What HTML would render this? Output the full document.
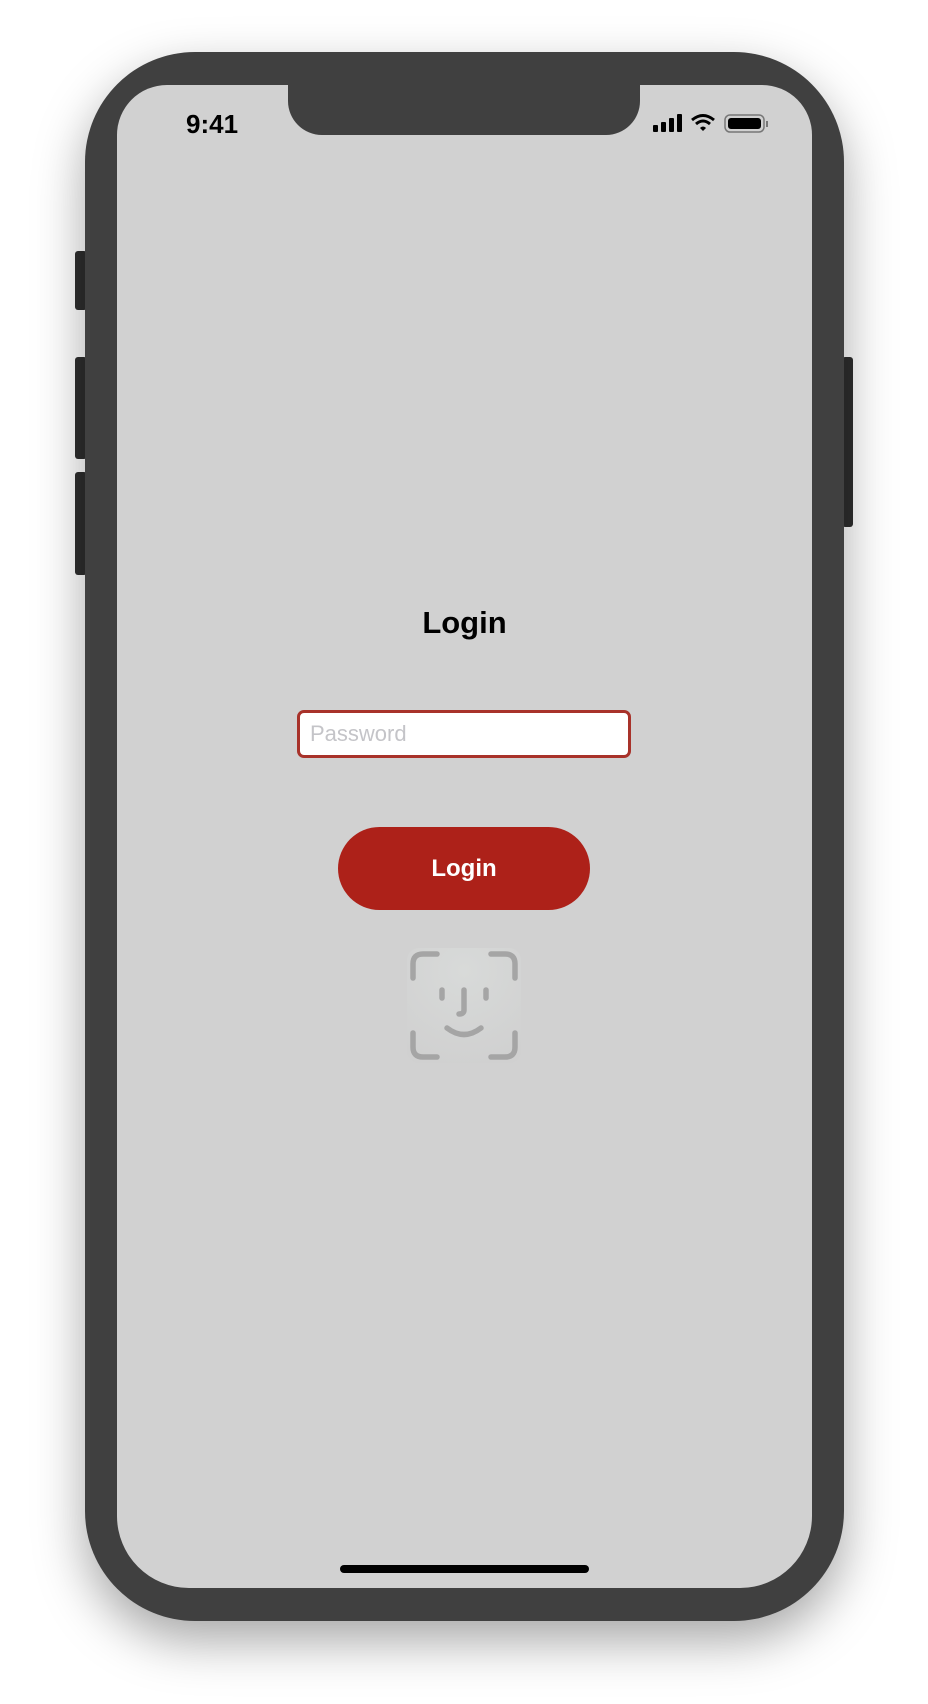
<!DOCTYPE html>
<html><head><style>
html,body{margin:0;padding:0;width:928px;height:1704px;background:#fff;overflow:hidden;font-family:"Liberation Sans",sans-serif;}
.abs{position:absolute}
.phone{left:85px;top:52px;width:759px;height:1569px;background:#404040;border-radius:110px;box-shadow:0 20px 50px rgba(0,0,0,0.35);}
.screen{left:117px;top:85px;width:695px;height:1503px;background:#d1d1d1;border-radius:50px 50px 72px 72px;overflow:hidden;}
.notch{left:171px;top:-2px;width:352px;height:52px;background:#404040;border-radius:0 0 34px 34px;}
.btn{background:#2e2e2e;border-radius:3px}
</style></head><body>
<div class="abs btn" style="left:75px;top:251px;width:12px;height:59px"></div>
<div class="abs btn" style="left:75px;top:357px;width:12px;height:102px"></div>
<div class="abs btn" style="left:75px;top:472px;width:12px;height:103px"></div>
<div class="abs btn" style="left:842px;top:357px;width:11px;height:170px"></div>
<div class="abs phone"></div>
<div class="abs screen">
  <div class="abs notch"></div>
  <div class="abs" style="left:69px;top:24px;font-size:26px;font-weight:bold;color:#000">9:41</div>
  <svg class="abs" style="left:536px;top:27px" width="125" height="24" viewBox="0 0 125 24">
    <rect x="0" y="13" width="5" height="7" rx="1"/><rect x="8" y="10" width="5" height="10" rx="1"/><rect x="16" y="6" width="5" height="14" rx="1"/><rect x="24" y="2" width="5" height="18" rx="1"/>
    <path d="M39 8 Q50 -1 61 8" stroke="#000" stroke-width="3" fill="none"/><path d="M43 12 Q50 6 57 12" stroke="#000" stroke-width="3" fill="none"/><path d="M47 16 L50 19 L53 16 Q50 13 47 16Z"/>
    <rect x="72" y="3" width="39" height="17" rx="5" fill="none" stroke="#777" stroke-width="1.5"/><rect x="75" y="6" width="33" height="11" rx="3"/><rect x="113" y="9" width="2" height="6" fill="#777"/>
  </svg>
  <div class="abs" style="left:0;width:695px;top:520px;text-align:center;font-size:31px;font-weight:bold;color:#000">Login</div>
  <div class="abs" style="left:180px;top:625px;background:#fff;border:3px solid #a8322a;border-radius:7px;width:328px;height:42px"></div>
  <div class="abs" style="left:193px;top:636px;font-size:22px;color:#c4c4c8">Password</div>
  <div class="abs" style="left:221px;top:742px;width:252px;height:83px;background:#ad2119;border-radius:42px;color:#fff;font-size:24px;font-weight:bold;text-align:center;line-height:83px">Login</div>
  <div class="abs" style="left:290px;top:863px;width:114px;height:115px;border-radius:12px;background:radial-gradient(circle at 50% 20%,#d8dad9,#cfcfcf)"></div>
  <svg class="abs" style="left:290px;top:863px" width="114" height="115" viewBox="0 0 114 115" fill="none" stroke="#a5a5a5" stroke-width="5.5" stroke-linecap="round">
    <path d="M6 30 V16 Q6 6 16 6 H30"/><path d="M84 6 H98 Q108 6 108 16 V30"/><path d="M108 85 V99 Q108 109 98 109 H84"/><path d="M30 109 H16 Q6 109 6 99 V85"/>
    <path d="M35 42 V50"/><path d="M79 42 V50"/><path d="M57 42 V62 Q57 66 52 66"/><path d="M40 80 Q57 93 74 80"/>
  </svg>
  <div class="abs" style="left:223px;top:1480px;width:249px;height:8px;background:#000;border-radius:4px"></div>
</div>
</body></html>
